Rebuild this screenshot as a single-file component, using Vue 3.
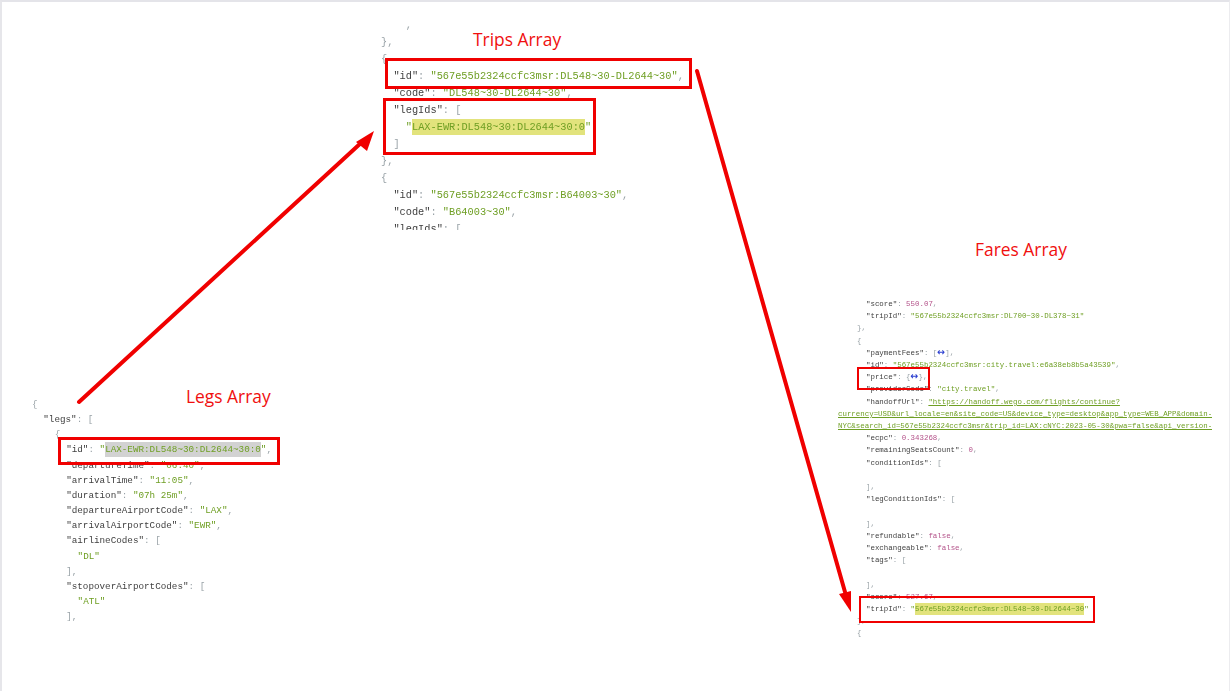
<script setup>
const s = (t) => [t, 's']
const k = (t) => [t, 'k']
const p = (t) => [t, 'p']
const n = (t) => [t, 'n']
const h = (t) => [t, 'h']
const g = (t) => [t, 'g']
const b = (t) => [t, 'b']
const u = (t) => [t, 'u']

const tripLines = [
  [2, [p(',')]],
  [0, [p('},')]],
  [0, [p('{')]],
  [1, [k('"id"'), p(': '), s('"567e55b2324ccfc3msr:DL548~30-DL2644~30"'), p(',')]],
  [1, [k('"code"'), p(': '), s('"DL548~30-DL2644~30"'), p(',')]],
  [1, [k('"legIds"'), p(': [')]],
  [2, [s('"'), h('LAX-EWR:DL548~30:DL2644~30:0'), s('"')]],
  [1, [p(']')]],
  [0, [p('},')]],
  [0, [p('{')]],
  [1, [k('"id"'), p(': '), s('"567e55b2324ccfc3msr:B64003~30"'), p(',')]],
  [1, [k('"code"'), p(': '), s('"B64003~30"'), p(',')]],
  [1, [k('"legIds"'), p(': [')]]
]

const legLines = [
  [0, [p('{')]],
  [1, [k('"legs"'), p(': [')]],
  [2, [p('{')]],
  [3, [k('"id"'), p(': '), s('"'), g('LAX-EWR:DL548~30:DL2644~30:0'), s('"'), p(',')]],
  [3, [k('"departureTime"'), p(': '), s('"06:40"'), p(',')]],
  [3, [k('"arrivalTime"'), p(': '), s('"11:05"'), p(',')]],
  [3, [k('"duration"'), p(': '), s('"07h 25m"'), p(',')]],
  [3, [k('"departureAirportCode"'), p(': '), s('"LAX"'), p(',')]],
  [3, [k('"arrivalAirportCode"'), p(': '), s('"EWR"'), p(',')]],
  [3, [k('"airlineCodes"'), p(': [')]],
  [4, [s('"DL"')]],
  [3, [p('],')]],
  [3, [k('"stopoverAirportCodes"'), p(': [')]],
  [4, [s('"ATL"')]],
  [3, [p('],')]]
]

const fareLines = [
  [2, [k('"score"'), p(': '), n('550.07'), p(',')]],
  [2, [k('"tripId"'), p(': '), s('"567e55b2324ccfc3msr:DL700~30-DL378~31"')]],
  [1, [p('},')]],
  [1, [p('{')]],
  [2, [k('"paymentFees"'), p(': ['), b('↔'), p('],')]],
  [2, [k('"id"'), p(': '), s('"567e55b2324ccfc3msr:city.travel:e6a38eb8b5a43539"'), p(',')]],
  [2, [k('"price"'), p(': {'), b('↔'), p('},')]],
  [2, [k('"providerCode"'), p(': '), s('"city.travel"'), p(',')]],
  [2, [k('"handoffUrl"'), p(': '), u('"https://handoff.wego.com/flights/continue?')]],
  [0, [u('currency=USD&url_locale=en&site_code=US&device_type=desktop&app_type=WEB_APP&domain-')]],
  [0, [u('NYC&search_id=567e55b2324ccfc3msr&trip_id=LAX:cNYC:2023-05-30&pwa=false&api_version-')]],
  [2, [k('"ecpc"'), p(': '), n('0.343268'), p(',')]],
  [2, [k('"remainingSeatsCount"'), p(': '), n('0'), p(',')]],
  [2, [k('"conditionIds"'), p(': [')]],
  [2, []],
  [2, [p('],')]],
  [2, [k('"legConditionIds"'), p(': [')]],
  [2, []],
  [2, [p('],')]],
  [2, [k('"refundable"'), p(': '), n('false'), p(',')]],
  [2, [k('"exchangeable"'), p(': '), n('false'), p(',')]],
  [2, [k('"tags"'), p(': [')]],
  [2, []],
  [2, [p('],')]],
  [2, [k('"score"'), p(': '), n('527.67'), p(',')]],
  [2, [k('"tripId"'), p(': '), s('"'), h('567e55b2324ccfc3msr:DL548~30-DL2644~30'), s('"')]],
  [1, [p('},')]],
  [1, [p('{')]]
]

const panels = [
  { name: 'trips', lines: tripLines },
  { name: 'legs', lines: legLines },
  { name: 'fares', lines: fareLines }
]
const titles = [
  { name: 't-trips', text: 'Trips Array' },
  { name: 't-legs', text: 'Legs Array' },
  { name: 't-fares', text: 'Fares Array' }
]
const boxes = ['b-tripid', 'b-legids', 'b-legid', 'b-price', 'b-fareid']
</script>

<template>
  <main class="canvas">
    <section v-for="panel in panels" :key="panel.name" class="panel" :class="panel.name">
      <div v-for="(line, i) in panel.lines" :key="i" class="line" :class="'lvl' + line[0]">
        <span v-for="(tok, j) in line[1]" :key="j" :class="tok[1]">{{ tok[0] }}</span>
      </div>
    </section>

    <h2 v-for="t in titles" :key="t.name" class="title" :class="t.name">{{ t.text }}</h2>
    <div v-for="box in boxes" :key="box" class="box" :class="box"></div>

    <svg class="arrows" width="1230" height="691" viewBox="0 0 1230 691">
      <line x1="79" y1="402" x2="362" y2="142" stroke="#f00000" stroke-width="4" stroke-linecap="round" />
      <polygon points="374,131 356,142 367,151" fill="#f00000" />
      <line x1="697" y1="71" x2="845" y2="592" stroke="#f00000" stroke-width="4" stroke-linecap="round" />
      <polygon points="851,612 839,594 851,591" fill="#f00000" />
    </svg>
  </main>
</template>

<style>
html, body { margin: 0; background: #fff; }
</style>

<style scoped>
.canvas {
  position: relative;
  width: 1230px;
  height: 691px;
  box-sizing: border-box;
  overflow: hidden;
  background: #fff;
  border-top: 2px solid #e4e4e9;
  border-left: 2px solid #e6e6ea;
  border-right: 1px solid #ececef;
}
.panel {
  position: absolute;
  overflow: hidden;
  font-family: "Liberation Mono", "DejaVu Sans Mono", monospace;
  color: #444;
}
.line { white-space: pre; min-height: 1lh; }
.k { color: #3f3f3f; }
.p { color: #9aa3a8; }
.s { color: #6f9f24; }
.n { color: #b4538a; }
.b {
  color: #2b3fd0;
  font-family: "DejaVu Sans", sans-serif;
  font-size: 9.5px;
  font-weight: 700;
  line-height: 1;
}
.u { color: #6f9f24; text-decoration: underline; }
.h { color: #6f9f24; background: #e2e37c; padding: 2px 0; }
.g { color: #6f9f24; background: #d2d2d2; padding: 2px 0; }

.trips {
  left: 379px;
  top: 14.5px;
  width: 330px;
  height: 213.5px;
  font-size: 10.3px;
  line-height: 17px;
  filter: blur(0.3px);
}
.trips .lvl1 { padding-left: 12.4px; }
.trips .lvl2 { padding-left: 24.8px; }

.legs {
  left: 30px;
  top: 395px;
  width: 260px;
  height: 228px;
  font-size: 9.28px;
  line-height: 15.15px;
  filter: blur(0.3px);
}
.legs .lvl1 { padding-left: 11.3px; }
.legs .lvl2 { padding-left: 22.8px; }
.legs .lvl3 { padding-left: 34.2px; }
.legs .lvl4 { padding-left: 45.6px; }

.fares {
  left: 836px;
  top: 296px;
  width: 374px;
  height: 344px;
  font-size: 7.43px;
  line-height: 12.2px;
  filter: blur(0.4px);
}
.fares .lvl1 { padding-left: 19px; }
.fares .lvl2 { padding-left: 28px; }

.title {
  position: absolute;
  margin: 0;
  font-family: "Open Sans", "Liberation Sans", sans-serif;
  font-weight: 400;
  font-size: 17.4px;
  line-height: 22px;
  color: #f00f0f;
  white-space: nowrap;
}
.t-trips { left: 471px; top: 26px; }
.t-legs { left: 184px; top: 383px; }
.t-fares { left: 973px; top: 236px; }

.box {
  position: absolute;
  box-sizing: border-box;
  border: 3px solid #f00000;
}
.b-tripid { left: 383px; top: 56px; width: 307px; height: 31px; }
.b-legids { left: 381px; top: 96px; width: 213px; height: 57px; }
.b-legid { left: 56px; top: 435px; width: 222px; height: 28px; }
.b-price { left: 855px; top: 365px; width: 73px; height: 23px; border-width: 2.5px; }
.b-fareid { left: 857px; top: 594px; width: 236px; height: 27px; border-width: 2.5px; }

.arrows {
  position: absolute;
  left: -2px;
  top: -2px;
  pointer-events: none;
}
</style>
